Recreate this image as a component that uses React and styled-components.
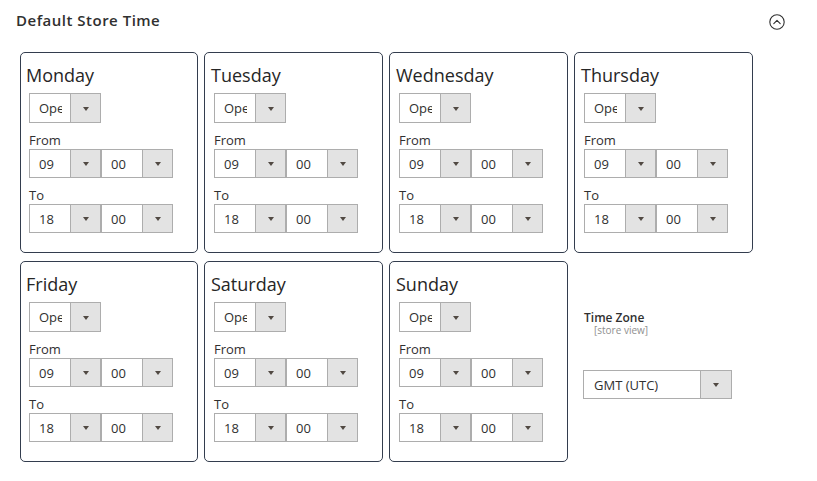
import React from 'react';
import styled, { createGlobalStyle } from 'styled-components';

const GlobalStyle = createGlobalStyle`
    body {
        margin: 0;
        background: #ffffff;
        font-family: 'Open Sans', sans-serif;
        color: #303030;
    }
`
const Page = styled.div`
    width: 817px;
    height: 481px;
    padding: 10px 33px 0 16px;
    box-sizing: border-box;
`
const Header = styled.div`
    display: flex;
    justify-content: space-between;
    align-items: center;
    height: 20px;
`
const Title = styled.h2`
    margin: 0;
    font-size: 15px;
    line-height: 20px;
    font-weight: 600;
    letter-spacing: 0.5px;
    color: #303030;
`
const CollapseBtn = styled.span`
    display: flex;
    width: 16px;
    height: 16px;
    margin-right: -1px;
    margin-top: 3px;
`
const Grid = styled.div`
    display: grid;
    grid-template-columns: 178px 179px 179px 179px;
    column-gap: 6px;
    row-gap: 8px;
    margin: 22px 0 0 4px;
`
const Card = styled.div`
    border: 1px solid #333d4e;
    border-radius: 5px;
    padding: 10px 8px 19px ${p => (p.$first ? 8 : 9)}px;
    box-sizing: border-box;
    height: 201px;
`
const DayName = styled.div`
    font-size: 18px;
    line-height: 24px;
    margin: 0 0 6px -3px;
    color: #262626;
`
const FieldLabel = styled.div`
    font-size: 13px;
    line-height: 18px;
    margin-top: 8px;
    color: #303030;
`
const SelectRow = styled.div`
    display: flex;
`
const Select = styled.div`
    display: flex;
    width: ${p => p.$width}px;
    height: ${p => p.$height || 29}px;
    border: 1px solid #adadad;
    box-sizing: border-box;
    background: #fff;
    font-size: 13px;
`
const Value = styled.div`
    flex: 1;
    display: flex;
    align-items: center;
    padding-left: ${p => p.$pad || 9}px;
    overflow: hidden;
`
const ValueText = styled.span`
    white-space: nowrap;
    overflow: hidden;
    max-width: ${p => (p.$clip ? `${p.$clip}px` : 'none')};
    color: #303030;
`
const Arrow = styled.div`
    width: ${p => p.$width || 30}px;
    border-left: 1px solid #adadad;
    background: #e3e3e3;
    box-sizing: border-box;
    display: flex;
    align-items: center;
    justify-content: center;

    &::after {
        content: '';
        border-left: 3.5px solid transparent;
        border-right: 3.5px solid transparent;
        border-top: 4px solid #514943;
        margin-top: 1px;
    }
`
const ZoneCell = styled.div`
    padding: 51px 0 0 9px;
`
const ZoneLabel = styled.div`
    font-size: 12px;
    line-height: 12px;
    font-weight: 600;
    padding-left: 1px;
    color: #303030;
`
const Scope = styled.div`
    font-size: 10px;
    line-height: 10px;
    color: #8f8f8f;
    padding-left: 11px;
    margin: 1px 0 35px;
`

const days = ['Monday', 'Tuesday', 'Wednesday', 'Thursday', 'Friday', 'Saturday', 'Sunday'];

const DropDown = ({ value, width = 72, clip, height }) => (
    <Select $width={width} $height={height}>
        <Value><ValueText $clip={clip}>{value}</ValueText></Value>
        <Arrow />
    </Select>
)

const DayCard = ({ day, first }) => (
    <Card $first={first}>
        <DayName>{day}</DayName>
        <DropDown value="Open" clip={23} height={30} />
        <FieldLabel>From</FieldLabel>
        <SelectRow>
            <DropDown value="09" />
            <DropDown value="00" />
        </SelectRow>
        <FieldLabel>To</FieldLabel>
        <SelectRow>
            <DropDown value="18" />
            <DropDown value="00" />
        </SelectRow>
    </Card>
)

const App = () => {
    return (
        <Page>
            <GlobalStyle />
            <Header>
                <Title>Default Store Time</Title>
                <CollapseBtn>
                    <svg width="16" height="16" viewBox="0 0 16 16" fill="none" stroke="#303030" strokeWidth="1.1">
                        <circle cx="8" cy="8" r="7.2" />
                        <path d="M4.8 9.6 L8 6.4 L11.2 9.6" strokeLinecap="round" strokeLinejoin="round" />
                    </svg>
                </CollapseBtn>
            </Header>
            <Grid>
                {days.map((d, i) => <DayCard key={d} day={d} first={i % 4 === 0} />)}
                <ZoneCell>
                    <ZoneLabel>Time Zone</ZoneLabel>
                    <Scope>[store view]</Scope>
                    <Select $width={149}>
                        <Value $pad={10}><ValueText>GMT (UTC)</ValueText></Value>
                        <Arrow $width={31} />
                    </Select>
                </ZoneCell>
            </Grid>
        </Page>
    );
}

export default App;
